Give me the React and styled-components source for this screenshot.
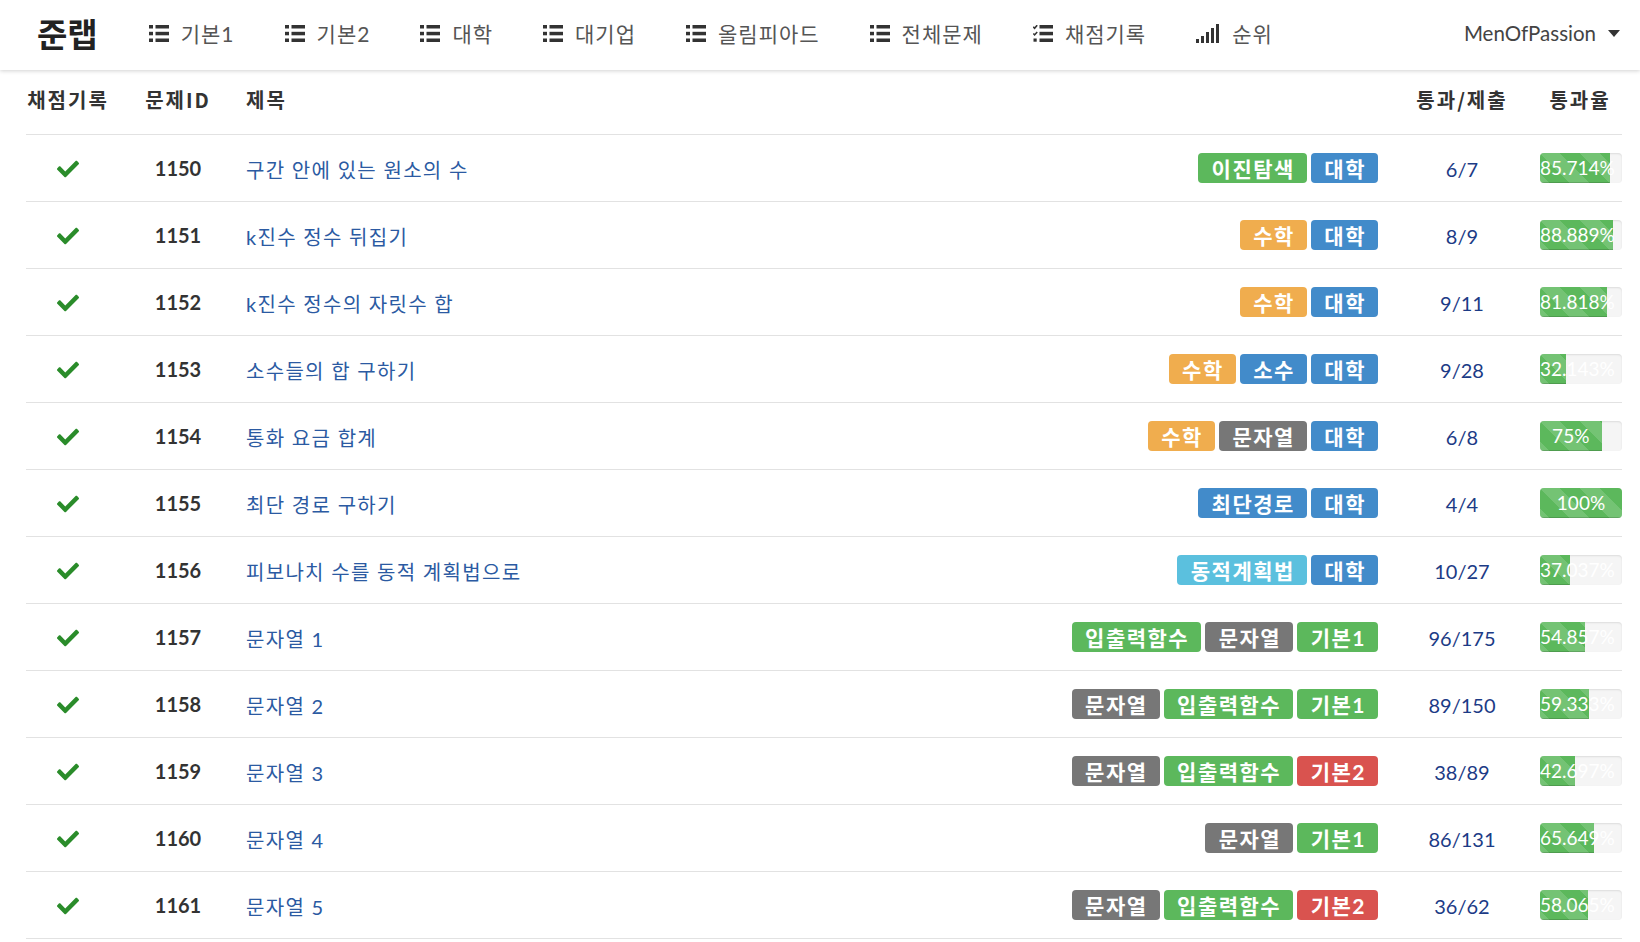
import React from 'react';
import styled, { createGlobalStyle } from 'styled-components';
import { FaCheck } from 'react-icons/fa';

const GlobalStyle = createGlobalStyle`
	html, body {
		margin: 0;
		padding: 0;
		background: #fff;
	}
	body {
		font-family: Lato, 'Noto Sans CJK KR', sans-serif;
		color: #333;
	}
`;

const COLORS = {
	green: '#5cb85c',
	blue: '#428bca',
	orange: '#f0ad4e',
	gray: '#777777',
	red: '#d9534f',
	info: '#5bc0de'
};

const problems = [
	{ id: 1150, title: '구간 안에 있는 원소의 수', tags: [['이진탐색', 'green'], ['대학', 'blue']], pass: 6, total: 7, rate: '85.714' },
	{ id: 1151, title: 'k진수 정수 뒤집기', tags: [['수학', 'orange'], ['대학', 'blue']], pass: 8, total: 9, rate: '88.889' },
	{ id: 1152, title: 'k진수 정수의 자릿수 합', tags: [['수학', 'orange'], ['대학', 'blue']], pass: 9, total: 11, rate: '81.818' },
	{ id: 1153, title: '소수들의 합 구하기', tags: [['수학', 'orange'], ['소수', 'blue'], ['대학', 'blue']], pass: 9, total: 28, rate: '32.143' },
	{ id: 1154, title: '통화 요금 합계', tags: [['수학', 'orange'], ['문자열', 'gray'], ['대학', 'blue']], pass: 6, total: 8, rate: '75' },
	{ id: 1155, title: '최단 경로 구하기', tags: [['최단경로', 'blue'], ['대학', 'blue']], pass: 4, total: 4, rate: '100' },
	{ id: 1156, title: '피보나치 수를 동적 계획법으로', tags: [['동적계획법', 'info'], ['대학', 'blue']], pass: 10, total: 27, rate: '37.037' },
	{ id: 1157, title: '문자열 1', tags: [['입출력함수', 'green'], ['문자열', 'gray'], ['기본1', 'green']], pass: 96, total: 175, rate: '54.857' },
	{ id: 1158, title: '문자열 2', tags: [['문자열', 'gray'], ['입출력함수', 'green'], ['기본1', 'green']], pass: 89, total: 150, rate: '59.333' },
	{ id: 1159, title: '문자열 3', tags: [['문자열', 'gray'], ['입출력함수', 'green'], ['기본2', 'red']], pass: 38, total: 89, rate: '42.697' },
	{ id: 1160, title: '문자열 4', tags: [['문자열', 'gray'], ['기본1', 'green']], pass: 86, total: 131, rate: '65.649' },
	{ id: 1161, title: '문자열 5', tags: [['문자열', 'gray'], ['입출력함수', 'green'], ['기본2', 'red']], pass: 36, total: 62, rate: '58.065' }
];

const navItems = [
	{ label: '기본1', icon: 'list' },
	{ label: '기본2', icon: 'list' },
	{ label: '대학', icon: 'list' },
	{ label: '대기업', icon: 'list' },
	{ label: '올림피아드', icon: 'list' },
	{ label: '전체문제', icon: 'list' },
	{ label: '채점기록', icon: 'tasks' },
	{ label: '순위', icon: 'signal' }
];

const Navbar = styled.nav`
	height: 70px;
	box-sizing: border-box;
	display: flex;
	align-items: center;
	padding: 0 20px 4px 37px;
	background: #fff;
	box-shadow: 0 1px 4px rgba(0, 0, 0, 0.18);
	position: relative;
	z-index: 2;
`;

const Brand = styled.a`
	font-family: 'Noto Sans CJK KR', sans-serif;
	font-size: 33px;
	font-weight: 700;
	color: #222;
	margin-right: 26px;
`;

const NavList = styled.ul`
	display: flex;
	list-style: none;
	margin: 0;
	padding: 0;
	flex: 1;
`;

const NavLink = styled.li`
	display: flex;
	align-items: center;
	gap: 12px;
	padding: 0 25px;
	font-size: 21px;
	letter-spacing: 1px;
	color: #555;
	font-weight: 400;
	line-height: 1;
`;

const UserMenu = styled.div`
	display: flex;
	align-items: center;
	gap: 12px;
	font-size: 20.5px;
	color: #444;
`;

const Content = styled.main`
	padding: 0 18px 0 26px;
`;

const Row = styled.div`
	display: grid;
	grid-template-columns: 84px 136px 1fr 152px 84px;
	align-items: center;
	height: ${(p) => (p.$head ? '65px' : '67px')};
	padding-bottom: ${(p) => (p.$head ? '6px' : '0')};
	box-sizing: border-box;
	border-bottom: 1px solid #e2e2e2;
	font-size: 20px;
`;

const HeadCell = styled.div`
	font-family: 'Noto Sans CJK KR', sans-serif;
	font-weight: 700;
	letter-spacing: 2px;
	color: #333;
	text-align: ${(p) => p.$align || 'center'};
`;

const CheckCell = styled.div`
	display: flex;
	justify-content: center;
	color: #2a8c2a;
	font-size: 22px;
	padding-top: 2px;
`;

const IdCell = styled.div`
	text-align: center;
	font-weight: 700;
	color: #333;
`;

const TitleCell = styled.div`
	display: flex;
	align-items: center;
	justify-content: space-between;
	padding-right: 8px;
`;

const Title = styled.a`
	color: #2b5aa2;
	font-size: 20px;
	letter-spacing: 1.3px;
	padding-top: 3px;
`;

const Tags = styled.div`
	display: flex;
	gap: 4px;
`;

const Tag = styled.span`
	display: inline-flex;
	align-items: center;
	height: 30px;
	padding: 0 12px 0 13.5px;
	border-radius: 4px;
	background: ${(p) => COLORS[p.$color]};
	color: #fff;
	font-family: Lato, 'Noto Sans CJK KR', sans-serif;
	font-weight: 700;
	font-size: 21px;
	letter-spacing: 1.5px;
	line-height: 1;
`;

const CountCell = styled.div`
	text-align: center;
	color: #1c3b86;
	padding-top: 2px;
`;

const RateCell = styled.div`
	padding-left: 2px;
`;

const Progress = styled.div`
	height: 30px;
	background: #f5f5f5;
	border-radius: 4px;
	box-shadow: inset 0 1px 2px rgba(0, 0, 0, 0.1);
	display: flex;
	overflow: hidden;
`;

const ProgressFill = styled.div`
	height: 100%;
	background-color: #5cb85c;
	background-image: linear-gradient(
		45deg,
		rgba(255, 255, 255, 0.15) 25%,
		transparent 25%,
		transparent 50%,
		rgba(255, 255, 255, 0.15) 50%,
		rgba(255, 255, 255, 0.15) 75%,
		transparent 75%,
		transparent
	);
	background-size: 40px 40px;
	box-shadow: inset 0 -1px 0 rgba(0, 0, 0, 0.15);
	color: #fff;
	font-size: 19px;
	line-height: 30px;
	text-align: center;
	white-space: nowrap;
`;

const ListIcon = () => (
	<svg width="20" height="17" viewBox="0 0 20 17" fill="#333">
		<rect x="0" y="0" width="4" height="3.5" />
		<rect x="6.5" y="0" width="13.5" height="3.5" />
		<rect x="0" y="6.8" width="4" height="3.5" />
		<rect x="6.5" y="6.8" width="13.5" height="3.5" />
		<rect x="0" y="13.5" width="4" height="3.5" />
		<rect x="6.5" y="13.5" width="13.5" height="3.5" />
	</svg>
);

const TasksIcon = () => (
	<svg width="20" height="17" viewBox="0 0 20 17" fill="#333">
		<path d="M0.3 1.8 L1.6 3.2 L4.2 0.2" stroke="#333" strokeWidth="1.6" fill="none" />
		<path d="M0.3 8.5 L1.6 9.9 L4.2 6.9" stroke="#333" strokeWidth="1.6" fill="none" />
		<rect x="0.5" y="13.5" width="3.2" height="3.2" />
		<rect x="6.5" y="0" width="13.5" height="3.5" />
		<rect x="6.5" y="6.8" width="13.5" height="3.5" />
		<rect x="6.5" y="13.5" width="13.5" height="3.5" />
	</svg>
);

const SignalIcon = () => (
	<svg width="24" height="19" viewBox="0 0 24 19" fill="#333">
		<rect x="0" y="15" width="3" height="4" />
		<rect x="5" y="12" width="3" height="7" />
		<rect x="10" y="8" width="3" height="11" />
		<rect x="15" y="4" width="3" height="15" />
		<rect x="20" y="0" width="3" height="19" />
	</svg>
);

const Caret = () => (
	<svg width="12" height="7" viewBox="0 0 12 7" fill="#333">
		<path d="M0 0 H12 L6 7 Z" />
	</svg>
);

const icons = { list: ListIcon, tasks: TasksIcon, signal: SignalIcon };

const App = () => {
	return (
		<>
			<GlobalStyle />
			<Navbar>
				<Brand>준랩</Brand>
				<NavList>
					{navItems.map((item) => {
						const Icon = icons[item.icon];
						return (
							<NavLink key={item.label}>
								<Icon />
								{item.label}
							</NavLink>
						);
					})}
				</NavList>
				<UserMenu>
					MenOfPassion
					<Caret />
				</UserMenu>
			</Navbar>
			<Content>
				<Row $head>
					<HeadCell>채점기록</HeadCell>
					<HeadCell>문제ID</HeadCell>
					<HeadCell $align="left">제목</HeadCell>
					<HeadCell>통과/제출</HeadCell>
					<HeadCell>통과율</HeadCell>
				</Row>
				{problems.map((p) => (
					<Row key={p.id}>
						<CheckCell>
							<FaCheck />
						</CheckCell>
						<IdCell>{p.id}</IdCell>
						<TitleCell>
							<Title>{p.title}</Title>
							<Tags>
								{p.tags.map(([name, color], i) => (
									<Tag key={i} $color={color}>
										{name}
									</Tag>
								))}
							</Tags>
						</TitleCell>
						<CountCell>
							{p.pass}/{p.total}
						</CountCell>
						<RateCell>
							<Progress>
								<ProgressFill style={{ width: `${p.rate}%` }}>{p.rate}%</ProgressFill>
							</Progress>
						</RateCell>
					</Row>
				))}
			</Content>
		</>
	);
};

export default App;
